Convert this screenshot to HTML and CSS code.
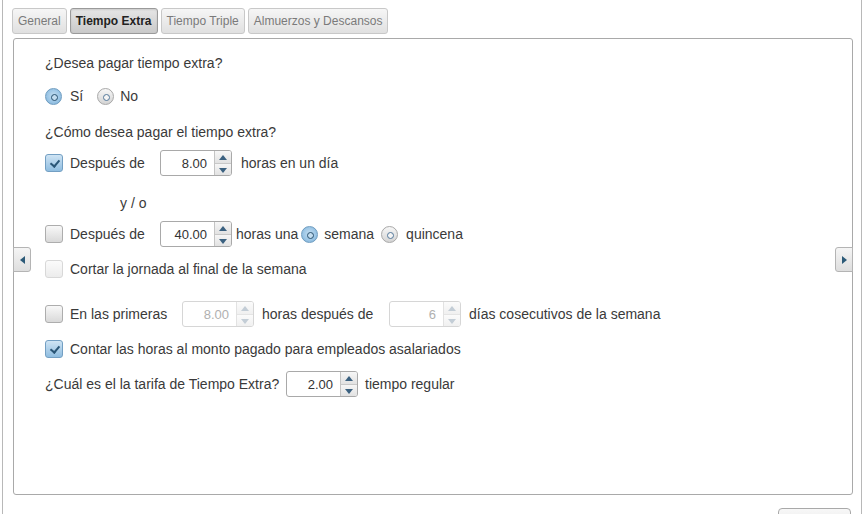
FILE: index.html
```html
<!DOCTYPE html>
<html lang="es">
<head>
<meta charset="utf-8">
<title>Tiempo Extra</title>
<link rel="stylesheet" href="styles.css">
</head>
<body>
<div class="frame">
  <div class="tabs">
    <div class="tab">General</div>
    <div class="tab active">Tiempo Extra</div>
    <div class="tab">Tiempo Triple</div>
    <div class="tab">Almuerzos y Descansos</div>
  </div>
  <div class="panel">
    <div class="content">
      <div class="row">¿Desea pagar tiempo extra?</div>

      <div class="row mt7">
        <span class="radio on"></span><span class="lbl-sm">Sí</span>
        <span class="radio gap14"></span><span class="lbl-r">No</span>
      </div>

      <div class="row mt10">¿Cómo desea pagar el tiempo extra?</div>

      <div class="row mt5">
        <span class="check on"></span>
        <span class="lbl w90">Después de</span>
        <span class="spin"><span class="val">8.00</span><span class="btns"><span class="up"></span><span class="down"></span></span></span>
        <span class="after9">horas en un día</span>
      </div>

      <div class="row mt14"><span class="yo">y / o</span></div>

      <div class="row mt5">
        <span class="check"></span>
        <span class="lbl w90">Después de</span>
        <span class="spin"><span class="val">40.00</span><span class="btns"><span class="up"></span><span class="down"></span></span></span>
        <span class="after4">horas una</span>
        <span class="radio on ml3"></span><span class="lbl-r">semana</span>
        <span class="radio ml7"></span><span class="lbl-r8">quincena</span>
      </div>

      <div class="row mt9">
        <span class="check disabled"></span>
        <span class="lbl">Cortar la jornada al final de la semana</span>
      </div>

      <div class="row mt19">
        <span class="check"></span>
        <span class="lbl w112">En las primeras</span>
        <span class="spin disabled"><span class="val">8.00</span><span class="btns"><span class="up"></span><span class="down"></span></span></span>
        <span class="after8 w127">horas después de</span>
        <span class="spin disabled"><span class="val">6</span><span class="btns"><span class="up"></span><span class="down"></span></span></span>
        <span class="after8">días cosecutivos de la semana</span>
      </div>

      <div class="row mt9">
        <span class="check on"></span>
        <span class="lbl">Contar las horas al monto pagado para empleados asalariados</span>
      </div>

      <div class="row mt9">
        <span class="w241">¿Cuál es el la tarifa de Tiempo Extra?</span>
        <span class="spin"><span class="val">2.00</span><span class="btns"><span class="up"></span><span class="down"></span></span></span>
        <span class="after7">tiempo regular</span>
      </div>
    </div>
    <div class="scroll left"><span class="tri-l"></span></div>
    <div class="scroll right"><span class="tri-r"></span></div>
  </div>
  <div class="footer"><div class="btn"></div></div>
</div>
</body>
</html>
```

FILE: styles.css
```css
* { box-sizing: border-box; }
html, body { margin: 0; padding: 0; background: #fff; }
body {
  font-family: "Liberation Sans", Arial, sans-serif;
  font-size: 14px;
  color: #3a3a3a;
  overflow: hidden;
}
.frame {
  margin-left: 2px;
  width: 860px;
  height: 514px;
  border-left: 1px solid #b8b8b8;
  border-right: 1px solid #b8b8b8;
  overflow: hidden;
}
.tabs {
  display: flex;
  gap: 3px;
  padding: 8px 0 0 9px;
}
.tab {
  height: 26px;
  padding: 0 5px;
  display: flex;
  align-items: center;
  font-size: 12px;
  color: #7a7a7a;
  border: 1px solid #c8c8c8;
  border-radius: 3px;
  background: linear-gradient(#f6f6f6, #e0e0e0);
}
.tab.active {
  color: #222;
  font-weight: bold;
  border-color: #9a9a9a;
  background: linear-gradient(#e6e6e6, #c9c9c9);
  box-shadow: inset 0 1px 2px rgba(0,0,0,0.12);
}
.panel {
  position: relative;
  margin: 4px 0 0 10px;
  width: 840px;
  height: 457px;
  border: 1px solid #a9a9a9;
  border-radius: 3px;
}
.content {
  padding: 11px 0 0 31px;
  display: flex;
  flex-direction: column;
}
.row {
  height: 26px;
  display: flex;
  align-items: center;
  white-space: nowrap;
}
.mt5 { margin-top: 5px; }
.mt7 { margin-top: 7px; }
.mt9 { margin-top: 9px; }
.mt10 { margin-top: 10px; }
.mt14 { margin-top: 14px; }
.mt19 { margin-top: 19px; }

.lbl { margin-left: 7px; }
.lbl-sm { margin-left: 8px; }
.lbl-r { margin-left: 6px; }
.lbl-r8 { margin-left: 8px; }
.w90 { width: 90px; flex: none; }
.w112 { width: 112px; flex: none; }
.w127 { width: 127px; flex: none; }
.w241 { width: 241px; flex: none; }
.gap14 { margin-left: 14px; }
.ml3 { margin-left: 3px; }
.ml7 { margin-left: 7px; }
.after9 { margin-left: 9px; }
.after8 { margin-left: 8px; }
.after7 { margin-left: 7px; }
.after4 { margin-left: 4px; }
.yo { margin-left: 75px; }

/* radio */
.radio {
  flex: none;
  position: relative;
  width: 17px;
  height: 17px;
  border-radius: 50%;
  border: 1px solid #a8a8a8;
  background: linear-gradient(#f7f7f7, #d4d4d4);
}
.radio::after {
  content: "";
  position: absolute;
  left: 5px;
  top: 5px;
  width: 5px;
  height: 5px;
  border-radius: 50%;
  border: 1.2px solid #52789a;
  background: #f4f4f4;
}
.radio.on {
  border-color: #6e9cc0;
  background: radial-gradient(circle at 50% 45%, #c4def1 0%, #9cc6e6 55%, #7aaed6 100%);
}
.radio.on::after {
  border: 1.6px solid #27506f;
  background: #c2dcef;
}

/* checkbox */
.check {
  flex: none;
  position: relative;
  width: 18px;
  height: 18px;
  border-radius: 3px;
  border: 1px solid #adadad;
  background: linear-gradient(#f8f8f8, #d9d9d9);
}
.check.disabled {
  border-color: #d8d8d8;
  background: linear-gradient(#fbfbfb, #ececec);
}
.check.on {
  border-color: #739fc3;
  background: linear-gradient(#cfe4f4, #8fbde0);
}
.check.on::after {
  content: "";
  position: absolute;
  left: 6px;
  top: 3px;
  width: 4px;
  height: 7px;
  border: solid #2a5677;
  border-width: 0 2px 2px 0;
  transform: rotate(40deg);
}

/* spinner */
.spin {
  flex: none;
  display: flex;
  width: 72px;
  height: 26px;
  border: 1px solid #a9a9a9;
  border-radius: 3px;
  background: #fff;
  overflow: hidden;
}
.spin .val {
  flex: 1;
  display: flex;
  align-items: center;
  justify-content: flex-end;
  padding-right: 7px;
  font-size: 13px;
  color: #333;
}
.spin .btns {
  width: 17px;
  display: flex;
  flex-direction: column;
  border-left: 1px solid #c4c4c4;
}
.spin .up, .spin .down {
  flex: 1;
  position: relative;
  background: linear-gradient(#f6f6f6, #e2e2e2);
}
.spin .up { border-bottom: 1px solid #c8c8c8; }
.spin .up::after, .spin .down::after {
  content: "";
  position: absolute;
  left: 4px;
  width: 0;
  height: 0;
  border-left: 4px solid transparent;
  border-right: 4px solid transparent;
}
.spin .up::after { top: 4px; border-bottom: 5px solid #3b6180; }
.spin .down::after { top: 4px; border-top: 5px solid #3b6180; }
.spin.disabled { border-color: #d6d6d6; }
.spin.disabled .val { color: #b0b0b0; }
.spin.disabled .btns { border-left-color: #e2e2e2; }
.spin.disabled .up, .spin.disabled .down { background: linear-gradient(#fbfbfb, #f0f0f0); }
.spin.disabled .up { border-bottom-color: #e4e4e4; }
.spin.disabled .up::after { border-bottom-color: #c3cdd6; }
.spin.disabled .down::after { border-top-color: #c3cdd6; }

/* scroll buttons */
.scroll {
  position: absolute;
  top: 208px;
  width: 18px;
  height: 25px;
  border: 1px solid #b4b4b4;
  background: linear-gradient(#f5f5f5, #dedede);
  display: flex;
  align-items: center;
  justify-content: center;
}
.scroll.left { left: -1px; border-radius: 0 3px 3px 0; }
.scroll.right { right: -1px; border-radius: 3px 0 0 3px; }
.tri-l {
  width: 0; height: 0;
  border-top: 4px solid transparent;
  border-bottom: 4px solid transparent;
  border-right: 5px solid #2c5a78;
}
.tri-r {
  width: 0; height: 0;
  border-top: 4px solid transparent;
  border-bottom: 4px solid transparent;
  border-left: 5px solid #2c5a78;
}

.footer {
  display: flex;
  justify-content: flex-end;
  padding: 13px 10px 0 0;
}
.btn {
  width: 73px;
  height: 30px;
  border: 1px solid #a9a9a9;
  border-radius: 4px;
  background: linear-gradient(#f7f7f7, #e6e6e6);
}
```
